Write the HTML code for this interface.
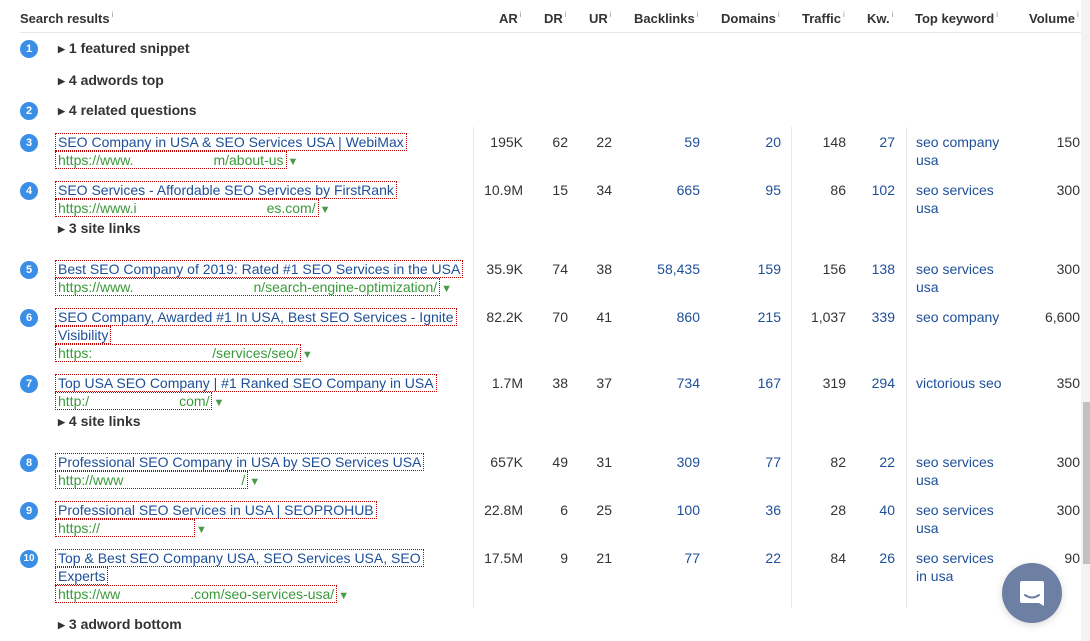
<!DOCTYPE html>
<html><head><meta charset="utf-8"><style>
*{margin:0;padding:0;box-sizing:border-box}
body{width:1090px;height:641px;overflow:hidden;background:#fff;font-family:"Liberation Sans",sans-serif;font-size:14px;color:#333;position:relative}
.a{position:absolute;white-space:nowrap;line-height:18px}
.h{font-weight:bold;color:#333;font-size:13px}
.h sup{font-weight:normal;font-size:8px;color:#999;vertical-align:6px;margin-left:2px}
.b{position:absolute;left:20px;width:18px;height:18px;border-radius:50%;background:#3a8ee6;color:#fff;font-size:11px;font-weight:bold;text-align:center;line-height:18px}
.s{font-weight:bold;color:#333}
.s i{font-style:normal;font-size:9px;margin-right:4px;vertical-align:1px}
.r{position:absolute;left:55px;width:415px;line-height:18px;white-space:normal}
.t{color:#1e4f99;border:1px dotted #b00;padding:0 2px;-webkit-box-decoration-break:clone;box-decoration-break:clone}
.u{color:#3a9a3a;border:1px dotted #b00;padding:0 2px;display:inline-block;line-height:16px}
.g{color:#4a9a4a;font-size:11px;margin-left:1px}
.x{display:inline-block;color:transparent}
.n{position:absolute;text-align:right;line-height:18px}
.l{color:#1e4f99}
.v{position:absolute;top:127px;height:481px;width:1px;background:#e6e6e6}
</style></head><body>
<div class="a h" style="left:20px;top:6px">Search results<sup>i</sup></div>
<div class="a h" style="left:499px;top:6px">AR<sup>i</sup></div>
<div class="a h" style="left:544px;top:6px">DR<sup>i</sup></div>
<div class="a h" style="left:589px;top:6px">UR<sup>i</sup></div>
<div class="a h" style="left:634px;top:6px">Backlinks<sup>i</sup></div>
<div class="a h" style="left:721px;top:6px">Domains<sup>i</sup></div>
<div class="a h" style="left:802px;top:6px">Traffic<sup>i</sup></div>
<div class="a h" style="left:867px;top:6px">Kw.<sup>i</sup></div>
<div class="a h" style="left:915px;top:6px">Top keyword<sup>i</sup></div>
<div class="a h" style="left:1029px;top:6px">Volume<sup>i</sup></div>
<div style="position:absolute;left:20px;top:32px;width:1061px;height:1px;background:#e8e8e8"></div>
<div class="v" style="left:473px"></div><div class="v" style="left:791px"></div><div class="v" style="left:906px"></div>

<div class="b" style="top:40px">1</div><div class="a s" style="left:58px;top:39px"><i>▶</i>1 featured snippet</div>
<div class="a s" style="left:58px;top:71px"><i>▶</i>4 adwords top</div>
<div class="b" style="top:102px">2</div><div class="a s" style="left:58px;top:101px"><i>▶</i>4 related questions</div>

<div class="b" style="top:134px">3</div>
<div class="r" style="top:133px"><span class="t">SEO Company in USA &amp; SEO Services USA | WebiMax</span><br><span class="u">https://www.<span class="x" style="width:80px">x</span>m/about-us</span><span class="g">▼</span></div>
<div class="b" style="top:182px">4</div>
<div class="r" style="top:181px"><span class="t">SEO Services - Affordable SEO Services by FirstRank</span><br><span class="u">https://www.i<span class="x" style="width:130px">x</span>es.com/</span><span class="g">▼</span></div>
<div class="a s" style="left:58px;top:219px"><i>▶</i>3 site links</div>
<div class="b" style="top:261px">5</div>
<div class="r" style="top:260px"><span class="t">Best SEO Company of 2019: Rated #1 SEO Services in the USA</span><br><span class="u">https://www.<span class="x" style="width:120px">x</span>n/search-engine-optimization/</span><span class="g">▼</span></div>
<div class="b" style="top:309px">6</div>
<div class="r" style="top:308px"><span class="t">SEO Company, Awarded #1 In USA, Best SEO Services - Ignite Visibility</span><br><span class="u">https:<span class="x" style="width:120px">x</span>/services/seo/</span><span class="g">▼</span></div>
<div class="b" style="top:375px">7</div>
<div class="r" style="top:374px"><span class="t">Top USA SEO Company | #1 Ranked SEO Company in USA</span><br><span class="u">http:/<span class="x" style="width:90px">x</span>com/</span><span class="g">▼</span></div>
<div class="a s" style="left:58px;top:412px"><i>▶</i>4 site links</div>
<div class="b" style="top:454px">8</div>
<div class="r" style="top:453px"><span class="t">Professional SEO Company in USA by SEO Services USA</span><br><span class="u">http://www<span class="x" style="width:118px">x</span>/</span><span class="g">▼</span></div>
<div class="b" style="top:502px">9</div>
<div class="r" style="top:501px"><span class="t">Professional SEO Services in USA | SEOPROHUB</span><br><span class="u">https://<span class="x" style="width:92px">x</span></span><span class="g">▼</span></div>
<div class="b" style="top:550px;font-size:10px">10</div>
<div class="r" style="top:549px"><span class="t">Top &amp; Best SEO Company USA, SEO Services USA, SEO Experts</span><br><span class="u">https://ww<span class="x" style="width:70px">x</span>.com/seo-services-usa/</span><span class="g">▼</span></div>
<div class="a s" style="left:58px;top:615px"><i>▶</i>3 adword bottom</div>

<div id="nums"></div>
<script>
var rows=[[133,"195K","62","22","59","20","148","27","seo company<br>usa","150"],
[181,"10.9M","15","34","665","95","86","102","seo services<br>usa","300"],
[260,"35.9K","74","38","58,435","159","156","138","seo services<br>usa","300"],
[308,"82.2K","70","41","860","215","1,037","339","seo company","6,600"],
[374,"1.7M","38","37","734","167","319","294","victorious seo","350"],
[453,"657K","49","31","309","77","82","22","seo services<br>usa","300"],
[501,"22.8M","6","25","100","36","28","40","seo services<br>usa","300"],
[549,"17.5M","9","21","77","22","84","26","seo services<br>in usa","90"]];
var R=[523,568,612,700,781,846,895],L=[0,0,0,1,1,0,1],h="";
rows.forEach(function(r){for(var i=0;i<7;i++){h+='<div class="n'+(L[i]?' l':'')+'" style="top:'+r[0]+'px;right:'+(1090-R[i])+'px">'+r[i+1]+'</div>';}
h+='<div class="a l" style="top:'+r[0]+'px;left:916px">'+r[8]+'</div>';
h+='<div class="n" style="top:'+r[0]+'px;right:10px">'+r[9]+'</div>';});
document.getElementById("nums").innerHTML=h;
</script>
<div style="position:absolute;left:1081px;top:0;width:9px;height:641px;background:#f3f3f3"></div>
<div style="position:absolute;left:1083px;top:402px;width:7px;height:162px;background:#c1c1c1"></div>
<div style="position:absolute;left:1002px;top:563px;width:60px;height:60px;border-radius:50%;background:#6d7fa3;box-shadow:0 2px 8px rgba(0,0,0,.15)">
<svg width="60" height="60" viewBox="0 0 60 60"><path d="M20 18h20a2 2 0 0 1 2 2v23l-5-3H20a2 2 0 0 1-2-2V20a2 2 0 0 1 2-2z" fill="#fff"/><path d="M23 32q7 5 14 0" stroke="#6d7fa3" stroke-width="2" fill="none" stroke-linecap="round"/></svg></div>
</body></html>
